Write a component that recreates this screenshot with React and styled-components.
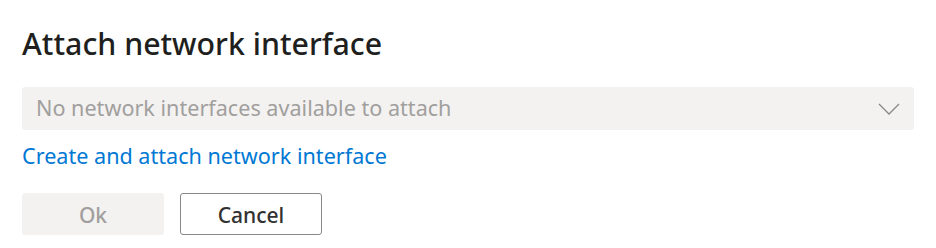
import React from "react";
import styled, { createGlobalStyle } from "styled-components";

const Global = createGlobalStyle`
  html, body { margin: 0; padding: 0; background: #ffffff; }
  body { font-family: "Noto Sans", "Open Sans", sans-serif; -webkit-font-smoothing: antialiased; }
`;

const Panel = styled.div`
  width: 936px;
  height: 248px;
  box-sizing: border-box;
  padding: 22px 22px 0 22px;
  display: flex;
  flex-direction: column;
`;

const Title = styled.h1`
  margin: 0;
  font-size: 30.3px;
  line-height: 44px;
  font-weight: 500;
  color: #201f1e;
`;

const Dropdown = styled.div`
  margin-top: 21px;
  height: 43px;
  border-radius: 3px;
  background: #f3f2f1;
  display: flex;
  align-items: center;
  justify-content: space-between;
  padding: 0 14px;
  box-sizing: border-box;
`;

const Placeholder = styled.span`
  font-size: 21.6px;
  line-height: 28px;
  color: #a19f9d;
  margin-top: -2px;
`;

const Chevron = styled.svg`
  width: 22px;
  height: 12px;
`;

const Link = styled.a`
  margin-top: 12px;
  font-size: 21.6px;
  line-height: 28px;
  color: #0078d4;
  text-decoration: none;
  align-self: flex-start;
`;

const Actions = styled.div`
  margin-top: 23px;
  display: flex;
  gap: 16px;
`;

const Button = styled.button`
  width: 142px;
  height: 42px;
  box-sizing: border-box;
  border-radius: 3px;
  font-family: inherit;
  font-size: 21px;
  font-weight: 500;
  border: 1px solid ${(p) => (p.disabled ? "#f3f2f1" : "#8a8886")};
  background: ${(p) => (p.disabled ? "#f3f2f1" : "#ffffff")};
  color: ${(p) => (p.disabled ? "#a19f9d" : "#323130")};
  padding: 2px 0 0 0;
`;

export default function App() {
  return (
    <>
      <Global />
      <Panel>
        <Title>Attach network interface</Title>
        <Dropdown>
          <Placeholder>No network interfaces available to attach</Placeholder>
          <Chevron viewBox="0 0 22 12">
            <path d="M1 1 L11 11 L21 1" fill="none" stroke="#8a8886" strokeWidth="1.3" />
          </Chevron>
        </Dropdown>
        <Link href="#">Create and attach network interface</Link>
        <Actions>
          <Button disabled>Ok</Button>
          <Button>Cancel</Button>
        </Actions>
      </Panel>
    </>
  );
}
